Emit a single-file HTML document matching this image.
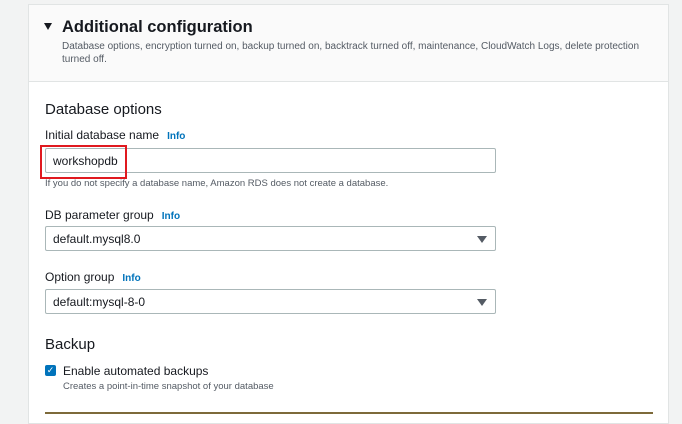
<!DOCTYPE html>
<html><head><style>
*{margin:0;padding:0;box-sizing:border-box}
body{width:682px;height:414px;background:#f2f3f3;font-family:"Liberation Sans",sans-serif;color:#16191f;position:relative;overflow:hidden}
.panel{position:absolute;left:28px;top:4px;width:641px;height:420px;background:#fff;border:1px solid #e1e4e4}
.hdr{position:absolute;left:0;top:0;width:100%;height:77px;background:#fafafa;border-bottom:1px solid #e1e4e4}
.a{position:absolute;white-space:nowrap}
.box{position:absolute;left:45px;width:451px;height:25px;border:1px solid #aab7b8;border-radius:2px;background:#fff;font-size:12px;padding:5px 0 0 7px}
.info{color:#0073bb;font-weight:bold;font-size:10px;margin-left:8px}
.lbl{font-size:12px}
.tri{position:absolute;right:8px;top:9px;width:0;height:0;border-left:5px solid transparent;border-right:5px solid transparent;border-top:7px solid #545b64}
</style></head><body>
<div class="panel"><div class="hdr"></div></div>
<div class="a" style="left:44px;top:23px;width:0;height:0;border-left:4px solid transparent;border-right:4px solid transparent;border-top:7px solid #16191f"></div>
<div class="a" style="left:62px;top:18px;font-size:16.5px;font-weight:bold">Additional configuration</div>
<div class="a" style="left:62px;top:40px;font-size:10px;line-height:13px;color:#545b64;white-space:normal;width:580px">Database options, encryption turned on, backup turned on, backtrack turned off, maintenance, CloudWatch Logs, delete protection turned off.</div>
<div class="a" style="left:45px;top:101px;font-size:15px">Database options</div>
<div class="a lbl" style="left:45px;top:128px">Initial database name<span class="info">Info</span></div>
<div class="box" style="top:148px">workshopdb</div>
<div class="a" style="left:40px;top:145px;width:87px;height:34px;border:2px solid #e0191f"></div>
<div class="a" style="left:45px;top:178px;font-size:9.5px;color:#545b64">If you do not specify a database name, Amazon RDS does not create a database.</div>
<div class="a lbl" style="left:45px;top:208px">DB parameter group<span class="info">Info</span></div>
<div class="box" style="top:226px">default.mysql8.0<div class="tri"></div></div>
<div class="a lbl" style="left:45px;top:270px">Option group<span class="info">Info</span></div>
<div class="box" style="top:289px">default:mysql-8-0<div class="tri"></div></div>
<div class="a" style="left:45px;top:336px;font-size:15px">Backup</div>
<div class="a" style="left:45px;top:365px;width:11px;height:11px;background:#0073bb;border-radius:2px;color:#fff;font-size:9px;line-height:11px;text-align:center">✓</div>
<div class="a lbl" style="left:63px;top:364px">Enable automated backups</div>
<div class="a" style="left:63px;top:381px;font-size:9.5px;color:#545b64">Creates a point-in-time snapshot of your database</div>
<div class="a" style="left:45px;top:412px;width:608px;height:2px;background:#7d6a3a"></div>
</body></html>
